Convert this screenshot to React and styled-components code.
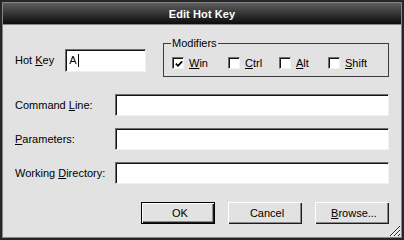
import React from 'react';
import styled, { createGlobalStyle } from 'styled-components';

const GlobalStyle = createGlobalStyle`
  html, body {
    margin: 0;
    padding: 0;
    background: #e2e2e2;
  }
  body {
    font-family: "Liberation Sans", Arial, sans-serif;
    font-size: 11px;
    color: #000;
  }
`;

const Window = styled.div`
  box-sizing: border-box;
  width: 404px;
  height: 240px;
  border: 2px solid #262626;
  padding: 1px;
  background: #858585;
  display: flex;
  flex-direction: column;
`;

const TitleBar = styled.div`
  height: 21px;
  margin-bottom: 1px;
  background: linear-gradient(#5e5e5e, #0c0c0c);
  display: flex;
  align-items: center;
  justify-content: center;
  color: #fff;
  font-weight: bold;
  font-size: 11px;
  letter-spacing: 0.1px;
`;

const Body = styled.div`
  position: relative;
  flex: 1;
  background: #e2e2e2;
  padding: 12px 12px 0;
  display: flex;
  flex-direction: column;
`;

const TopRow = styled.div`
  display: flex;
  align-items: flex-start;
  height: 40px;
`;

const HotKeyField = styled.div`
  display: flex;
  align-items: center;
  gap: 11px;
  margin-top: 12px;
`;

const Label = styled.span`
  white-space: nowrap;
  line-height: 13px;
`;

const TextBox = styled.div`
  box-sizing: border-box;
  width: ${p => p.$width || 'auto'};
  height: ${p => p.$height || 22}px;
  background: #fff;
  border-style: solid;
  border-width: 1px;
  border-color: #6e6e6e #f2f2ea #f2f2ea #6e6e6e;
  box-shadow: inset 1px 1px 0 #141414;
  padding: 0 0 0 3px;
  display: flex;
  align-items: center;
  line-height: 13px;
`;

const Caret = styled.span`
  display: inline-block;
  width: 1px;
  height: 13px;
  margin-left: 1px;
  background: #000;
`;

const GroupBox = styled.div`
  position: relative;
  box-sizing: border-box;
  margin-left: auto;
  margin-top: 6px;
  width: 226px;
  height: 34px;
  border: 1px solid #3c3c3c;
  padding: 12px 0 0 8px;
  display: flex;
`;

const Legend = styled.span`
  position: absolute;
  top: -7px;
  left: 7px;
  padding: 0 1px;
  background: #e2e2e2;
  line-height: 13px;
`;

const CheckItem = styled.label`
  display: flex;
  align-items: center;
  gap: 5px;
  height: 14px;
  width: ${p => (p.$width ? `${p.$width}px` : 'auto')};
  line-height: 13px;
`;

const CheckBox = styled.span`
  box-sizing: border-box;
  width: 12px;
  height: 12px;
  background: #fff;
  border-style: solid;
  border-width: 1px;
  border-color: #6e6e6e #f2f2ea #f2f2ea #6e6e6e;
  box-shadow: inset 1px 1px 0 #141414;
  display: flex;
  align-items: center;
  justify-content: center;
  padding: 1px 0 0 1px;
`;

const FormGrid = styled.div`
  display: grid;
  grid-template-columns: 100px 1fr;
  grid-auto-rows: 22px;
  row-gap: 12px;
  align-items: center;
  margin-top: 17px;
`;

const ButtonRow = styled.div`
  display: flex;
  justify-content: flex-end;
  gap: 13px;
  margin-top: 18px;
`;

const Button = styled.button`
  box-sizing: border-box;
  width: 74px;
  height: 22px;
  margin: 0;
  padding: 0;
  font-family: inherit;
  font-size: 11px;
  color: #000;
  background: #e2e2e2;
  border: ${p => (p.$default ? '1px solid #000' : 'none')};
  box-shadow: inset 1px 1px 0 #ffffff, inset -1px -1px 0 #1c1c1c,
    inset -2px -2px 0 #8a8a8a;
  padding-left: 4px;
`;

const Grip = styled.svg`
  position: absolute;
  right: 1px;
  bottom: 0;
`;

const CheckMark = () => (
  <svg width="8" height="8" viewBox="0 0 8 8">
    <polyline points="0.8,3.6 3,5.8 7.2,1.4" fill="none" stroke="#000" strokeWidth="1.8" />
  </svg>
);

const modifiers = [
  { key: 'W', rest: 'in', width: 56, checked: true },
  { key: 'C', rest: 'trl', width: 51 },
  { key: 'A', rest: 'lt', width: 49 },
  { key: 'S', rest: 'hift' },
];

const fields = [
  { pre: 'Command ', key: 'L', rest: 'ine:' },
  { pre: '', key: 'P', rest: 'arameters:' },
  { pre: 'Working ', key: 'D', rest: 'irectory:' },
];

export default function App() {
  return (
    <>
      <GlobalStyle />
      <Window>
        <TitleBar>Edit Hot Key</TitleBar>
        <Body>
          <TopRow>
            <HotKeyField>
              <Label>
                Hot <u>K</u>ey
              </Label>
              <TextBox $width="81px" $height={23}>
                A<Caret />
              </TextBox>
            </HotKeyField>
            <GroupBox>
              <Legend>Modifiers</Legend>
              {modifiers.map(m => (
                <CheckItem key={m.key} $width={m.width}>
                  <CheckBox>{m.checked && <CheckMark />}</CheckBox>
                  <span>
                    <u>{m.key}</u>
                    {m.rest}
                  </span>
                </CheckItem>
              ))}
            </GroupBox>
          </TopRow>

          <FormGrid>
            {fields.map(f => (
              <React.Fragment key={f.key}>
                <Label>
                  {f.pre}
                  <u>{f.key}</u>
                  {f.rest}
                </Label>
                <TextBox />
              </React.Fragment>
            ))}
          </FormGrid>

          <ButtonRow>
            <Button $default>OK</Button>
            <Button>Cancel</Button>
            <Button>
              <u>B</u>rowse...
            </Button>
          </ButtonRow>

          <Grip width="11" height="11" viewBox="0 0 11 11">
            <g strokeWidth="1" shapeRendering="crispEdges">
              <line x1="10.5" y1="0.5" x2="0.5" y2="10.5" stroke="#2a2a2a" />
              <line x1="10.5" y1="1.5" x2="1.5" y2="10.5" stroke="#ffffff" />
              <line x1="10.5" y1="4.5" x2="4.5" y2="10.5" stroke="#2a2a2a" />
              <line x1="10.5" y1="5.5" x2="5.5" y2="10.5" stroke="#ffffff" />
              <line x1="10.5" y1="8.5" x2="8.5" y2="10.5" stroke="#2a2a2a" />
            </g>
          </Grip>
        </Body>
      </Window>
    </>
  );
}
